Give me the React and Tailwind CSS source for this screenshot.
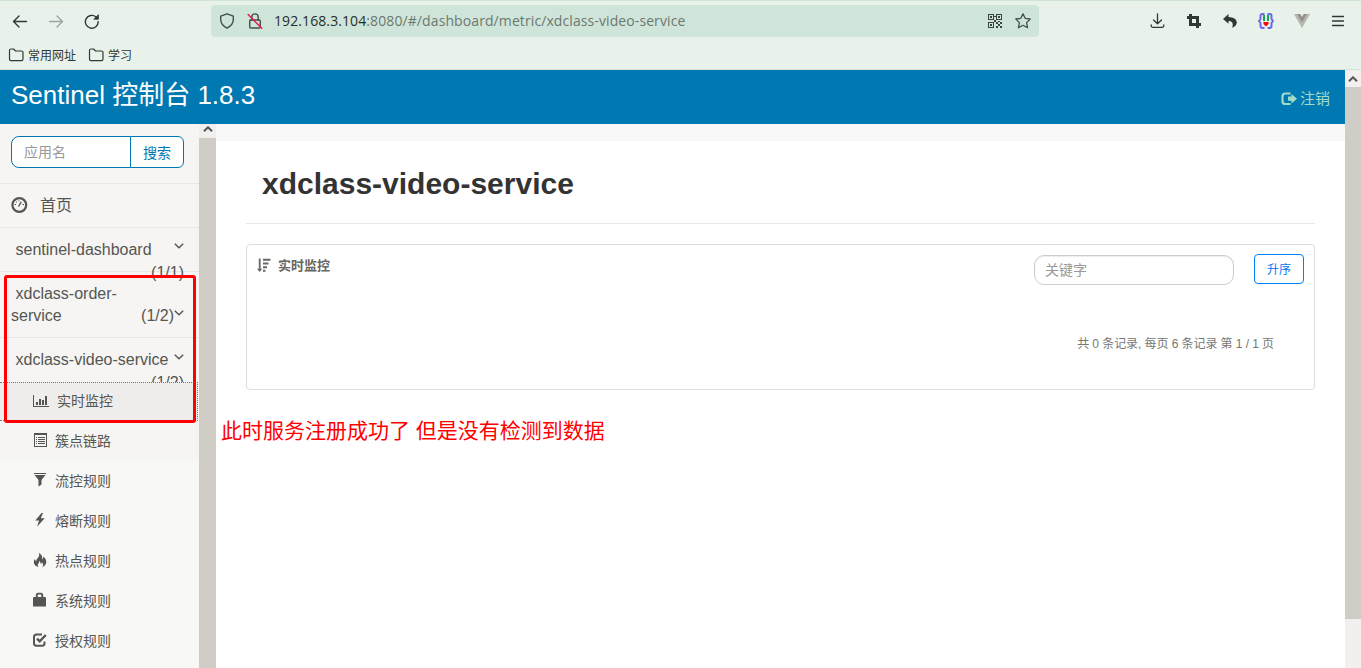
import React from 'react';

const bookmarks = [
  { nome: '常用网址', w: 'w-[80px]' },
  { nome: '学习', w: 'w-[50px]' },
];

const stroke = { fill: 'none', stroke: 'currentColor', strokeWidth: 1.4, strokeLinecap: 'round', strokeLinejoin: 'round' };

function Arrow({ className }) {
  return (
    <svg className={className} width="16" height="16" viewBox="0 0 16 16" {...stroke}>
      <path d="M14.5 8.5H1.5M7 3L1.5 8.5L7 14" />
    </svg>
  );
}

function Chevron({ className }) {
  return (
    <svg className={className} width="10" height="6" viewBox="0 0 10 6" fill="none" stroke="#555551" strokeWidth="1.4">
      <path d="M0.8 0.8L5 4.8L9.2 0.8" />
    </svg>
  );
}

function QrIcon() {
  return (
    <svg width="14" height="14" viewBox="0 0 14 14" fill="#3b4540" shapeRendering="crispEdges">
      <path fillRule="evenodd" d="M0 0h6v6H0zM1 1v4h4V1zM8 0h6v6H8zM9 1v4h4V1zM0 8h6v6H0zM1 9v4h4V9z" />
      <path d="M2 2h2v2H2zM10 2h2v2h-2zM2 10h2v2H2zM6 2h2v1H6zM6 6h2v2H6zM8 8h2v2H8zM10 10h2v2h-2zM12 8h2v2h-2zM8 12h2v2H8zM12 12h2v2h-2zM10 7h2v1h-2z" />
    </svg>
  );
}

function FehelperIcon() {
  return (
    <svg width="16" height="16" viewBox="0 0 16 16">
      <path d="M6.5 1H4.5Q2.5 1 2.5 3V6L1 8L2.5 10V13Q2.5 15 4.5 15H6.5M9.5 1H11.5Q13.5 1 13.5 3V6L15 8L13.5 10V13Q13.5 15 11.5 15H9.5" fill="none" stroke="#6c67ee" strokeWidth="2" />
      <path d="M5 2h2v6H5zM9 2h2v6H9z" fill="#0fa958" />
      <path d="M5.5 9h5v2L8 13.5L5.5 11z" fill="#f00" />
    </svg>
  );
}

function BrowserBar() {
  return (
    <div className="h-[70px] bg-[#e8f2ea] border-t border-b border-[#cfe3d6] font-['Open_Sans','Noto_Sans_CJK_SC',sans-serif] text-[#2f3833]">
      <div className="flex items-center h-10 pl-3">
        <Arrow />
        <svg className="ml-5 text-[#9ba69f]" width="16" height="16" viewBox="0 0 16 16" {...stroke}>
          <path d="M1.5 8.5H14.5M9 3L14.5 8.5L9 14" />
        </svg>
        <svg className="ml-5" width="16" height="16" viewBox="0 0 16 16" {...stroke}>
          <path d="M14.2 8.7A6.4 6.4 0 1 1 12 4L13.5 5.4" />
          <path d="M14.4 2V6.2H10.2z" fill="currentColor" strokeWidth="0.8" />
        </svg>
        <div className="flex items-center ml-[111px] w-[828px] h-8 rounded bg-[#d0e5d9] pl-2 pr-2 text-[#444f49]">
          <svg width="16" height="16" viewBox="0 0 16 16" {...stroke}>
            <path d="M8 .9L14.3 3.2V6.6Q14.3 12 8 15.1Q1.7 12 1.7 6.6V3.2Z" />
          </svg>
          <svg className="ml-3" width="16" height="16" viewBox="0 0 16 16" {...stroke}>
            <path d="M2.7 7.7Q2.7 7 3.7 7H12.3Q13.3 7 13.3 8V14Q13.3 15 12.3 15H3.7Q2.7 15 2.7 14Z" />
            <path d="M4.8 7V4Q4.8 .9 8 .9T11.2 4V7" />
            <path d="M1.2 1.6L14.8 15.3" stroke="#e6184d" />
          </svg>
          <div className="ml-[11px] text-[14px] leading-5 tracking-[0.095px] whitespace-nowrap text-[#6c7871]">
            <span className="text-[#26302b]">192.168.3.104</span>:8080/#/dashboard/metric/xdclass-video-service
          </div>
          <div className="flex items-center gap-[13px] ml-auto">
            <QrIcon />
            <svg width="16" height="16" viewBox="0 0 16 16" {...stroke} strokeWidth="1.3">
              <path d="M8 .9L10.2 5.3L15.2 6L11.6 9.6L12.5 14.7L8 12.3L3.5 14.7L4.4 9.6L.8 6L5.8 5.3Z" />
            </svg>
          </div>
        </div>
        <div className="flex items-center gap-5 ml-auto mr-[15px]">
          <svg width="16" height="16" viewBox="0 0 16 16" {...stroke} strokeWidth="1.3">
            <path d="M7.5 .8V10.5M3.5 7L7.5 10.8L11.5 7M1.2 11.8V12.8Q1.2 14.3 2.7 14.3H12.3Q13.8 14.3 13.8 12.8V11.8" />
          </svg>
          <svg width="16" height="16" viewBox="0 0 16 16" fill="none" stroke="currentColor" strokeWidth="3">
            <path d="M4.5 1V11.5H15M1 4.5H11.5V15" />
          </svg>
          <svg width="16" height="16" viewBox="0 0 16 16" fill="currentColor">
            <path d="M6.5 1L1 5.9L6.5 10.8V8Q12.3 7.7 10.2 14.8Q14.8 12.8 14.8 9.2Q14.3 4.2 6.5 4Z" />
          </svg>
          <FehelperIcon />
          <svg width="16" height="16" viewBox="0 0 16 16">
            <path d="M0 1H5L8 6.2L11 1H16L8 15Z" fill="#b9b5b0" />
            <path d="M3.2 1H6.3L8 4L9.7 1H12.8L8 9.3Z" fill="#918f8c" />
          </svg>
          <svg width="16" height="16" viewBox="0 0 16 16" {...stroke} strokeWidth="1.3">
            <path d="M2.5 3.5h11M2.5 8h11M2.5 12.5h11" />
          </svg>
        </div>
      </div>
      <div className="flex h-7 pl-2 pt-[2px] text-[12px]">
        {bookmarks.map((b) => (
          <div key={b.nome} className={`flex items-center gap-1 h-6 whitespace-nowrap ${b.w}`}>
            <svg width="16" height="14" viewBox="0 0 16 14" {...stroke} strokeWidth="1.2">
              <path d="M1.5 2.5Q1.5 1 3 1H5.5L7.5 3H13.5Q15 3 15 4.5V11Q15 12.7 13.5 12.7H3Q1.5 12.7 1.5 11Z" />
            </svg>
            <span className="pt-[2px]">{b.nome}</span>
          </div>
        ))}
      </div>
    </div>
  );
}

function ScrollArrow() {
  return (
    <svg width="10" height="6" viewBox="0 0 10 6" fill="none" stroke="#555" strokeWidth="2">
      <path d="M1 5.2L5 1.3L9 5.2" />
    </svg>
  );
}

const iconBox = 'w-4 h-4 shrink-0 -mt-[2px]';

const menu = [
  {
    label: '簇点链路',
    icon: (
      <svg className={iconBox} viewBox="0 0 16 16" fill="#555551" shapeRendering="crispEdges">
        <path fillRule="evenodd" d="M2 1h13v14H2zM3 3v11h11V3z" />
        <path d="M4 5h1v1H4zM6 5h7v1H6zM4 7h1v1H4zM6 7h7v1H6zM4 9h1v1H4zM6 9h7v1H6zM4 11h1v1H4zM6 11h7v1H6z" />
      </svg>
    ),
  },
  {
    label: '流控规则',
    icon: (
      <svg className={iconBox} viewBox="0 0 16 16" fill="#555551">
        <path d="M2 1h12v1H2zM2.5 3h11L9.5 8V12.5L6.5 14.5V8Z" />
      </svg>
    ),
  },
  {
    label: '熔断规则',
    icon: (
      <svg className={iconBox} viewBox="0 0 16 16" fill="#555551">
        <path d="M9.5 1L3.3 8.5H7L5 14.8L12.7 6.2H8.8L11 1Z" />
      </svg>
    ),
  },
  {
    label: '热点规则',
    icon: (
      <svg className={iconBox} viewBox="0 0 16 16" fill="#555551">
        <path d="M7 .8Q11 3.5 10 7.5Q11.7 6.5 11.2 4.5Q14.5 7 14.2 10.5Q13.8 13.5 10.3 15Q12 12.5 10 10Q9.8 11.5 8.8 12Q8.5 9.5 7 8.8Q7.5 11 6 12Q5.3 13.5 6.3 15Q2 13.7 1.8 10.3Q1.7 8.5 3 7Q3.1 8.5 4.2 9.3Q4.2 7.2 6.3 5.6Q8 3.8 7 .8Z" />
      </svg>
    ),
  },
  {
    label: '系统规则',
    icon: (
      <svg className={iconBox} viewBox="0 0 16 16" fill="#555551">
        <path fillRule="evenodd" d="M3.8 5V3Q3.8 .8 6 .8H9Q11.2 .8 11.2 3V5H13Q14 5 14 6V14.5H1V6Q1 5 2 5ZM5.7 5H9.3V3Q9.3 2.6 9 2.6H6Q5.7 2.6 5.7 3Z" />
      </svg>
    ),
  },
  {
    label: '授权规则',
    icon: (
      <svg className={iconBox} viewBox="0 0 16 16" fill="none" stroke="#555551" strokeWidth="2">
        <path d="M10 2.5H4.5Q2 2.5 2 5V11.3Q2 13.8 4.5 13.8H10Q12.5 13.8 12.5 11.3V9.5" />
        <path d="M5 6.7L7.7 9.4L13.8 3" strokeWidth="2.4" />
      </svg>
    ),
  },
];

function Sidebar() {
  return (
    <aside className="relative flex w-[216px] shrink-0 bg-[#f8f8f6] text-[#555551]">
      <div className="w-[199px]">
        <div className="bg-[#f6f5f3]">
          <div className="h-[60px] pt-3 pl-[11px] border-b border-[#e7e7e5]">
            <div className="flex w-[173px] h-8 rounded-lg rounded-r-md border border-[#0079b2] bg-white text-[14px] overflow-hidden">
              <div className="w-[119px] pl-3 leading-[30px] text-[#999] border-r border-[#0079b2]">应用名</div>
              <div className="flex-1 text-center leading-[32px] text-[#0079b2]">搜索</div>
            </div>
          </div>
          <div className="flex items-center h-11 pl-[11px] border-b border-[#e7e7e5] text-[16px]">
            <svg className="-mt-[2px]" width="17" height="16" viewBox="0 0 17 16" fill="none" stroke="#555551">
              <circle cx="8.3" cy="8" r="6.9" strokeWidth="2.2" />
              <path d="M7.5 9.5L10.3 4.8" strokeWidth="1.4" />
              <path d="M3.5 7.5h1.5M5 4.6l1 .8M8 3.3v1M11.5 7.5h1.5" strokeWidth="1" />
            </svg>
            <span className="ml-3">首页</span>
          </div>
          <div className="h-11 pl-[15.5px] pr-[15px] pt-[10px] border-b border-[#e7e7e5] text-[16px] leading-[23px]">
            <div className="flex justify-between">
              <span>sentinel-dashboard</span>
              <Chevron className="mt-[5px]" />
            </div>
            <div className="text-right">(1/1)</div>
          </div>
          <div className="h-[66px] pl-[11px] pr-[15px] pt-[11px] border-b border-[#e7e7e5] text-[16px] leading-[22px]">
            <div className="pl-[4.5px]">xdclass-order-</div>
            <div className="flex">
              <span>service</span>
              <span className="ml-auto">(1/2)</span>
              <Chevron className="mt-[5px]" />
            </div>
          </div>
          <div className="h-11 pl-[15.5px] pr-[15px] pt-[10px] text-[16px] leading-[23px] overflow-hidden">
            <div className="flex justify-between">
              <span>xdclass-video-service</span>
              <Chevron className="mt-[6px]" />
            </div>
            <div className="text-right">(1/2)</div>
          </div>
          <div className="flex items-center w-[198px] h-[39px] pl-8 bg-[#eeedeb] border border-l-0 border-dotted border-[#777] text-[14px]">
            <svg className="-mt-px" width="17" height="16" viewBox="0 0 17 16" fill="#555551" shapeRendering="crispEdges">
              <path d="M1 2h1v12H1zM1 13h16v1H1zM4 9h2v3H4zM7 6h2v6H7zM10 7h2v5h-2zM13 3h2v9h-2z" />
            </svg>
            <span className="ml-2">实时监控</span>
          </div>
          <div className="h-10">
            <MenuItem item={menu[0]} />
          </div>
        </div>
        {menu.slice(1).map((item) => (
          <MenuItem key={item.label} item={item} />
        ))}
      </div>
      <div className="w-[17px] bg-[#d0cdc6]">
        <div className="flex items-center justify-center h-[14px] pb-[5px] bg-[#f1f0ee]">
          <ScrollArrow />
        </div>
      </div>
      {/* red highlight over the services */}
      <div className="absolute left-1 top-[151px] w-[192px] h-[148px] border-3 border-[#f00] rounded-[3px]" />
    </aside>
  );
}

function MenuItem({ item }) {
  return (
    <div className="flex items-center h-10 pl-8 text-[14px]">
      {item.icon}
      <span className="ml-[7px]">{item.label}</span>
    </div>
  );
}

function Content() {
  return (
    <main className="flex-1">
      <div className="h-[17px] bg-[#f8f8f8]" />
      <div className="px-[30px]">
        <h1 className="h-[83px] pl-4 pt-[24px] border-b border-[#e7e7e5] text-[30px] leading-[38px] font-bold text-[#333]">xdclass-video-service</h1>
        <div className="h-[146px] mt-[20px] border border-[#ddddd8] rounded-[4px]">
          <div className="flex h-[60px] pl-[10px] pr-[10px]">
            <svg className="mt-[13px]" width="15" height="15" viewBox="0 0 15 15" fill="#666662">
              <path d="M1.8 .5h1.8v10.3H5.3L2.7 14L0 10.8H1.8zM6 .8h7.5v2H6zM6 4.5h5.5v2H6zM6 8.2h4v2H6zM6 11.8h2.5v2H6z" />
            </svg>
            <span className="ml-[6px] pt-[11px] text-[13px] leading-5 font-bold text-[#666662]">实时监控</span>
            <div className="ml-auto mt-[10px] w-[200px] h-[30px] pl-[10px] border border-[#ccccc8] rounded-[10px] shadow-[inset_0_1px_1px_rgba(0,0,0,0.075)] text-[14px] leading-[28px] text-[#999]">关键字</div>
            <div className="ml-5 mt-[9px] w-[50px] h-[30px] border border-[#0081f9] rounded-[4px] text-center text-[12px] leading-[30px] text-[#0079f2]">升序</div>
          </div>
          <div className="pr-[40px] pt-[29px] text-right text-[12px] leading-5 tracking-[-0.07px] text-[#777772]">共 0 条记录, 每页 6 条记录 第 1 / 1 页</div>
        </div>
      </div>
      <p className="pl-[5px] mt-[25px] text-[21px] leading-8 text-[#f00]">此时服务注册成功了 但是没有检测到数据</p>
    </main>
  );
}

export default function App() {
  return (
    <div className="w-[1361px] h-[668px] overflow-hidden bg-white font-['Liberation_Sans','Noto_Sans_CJK_SC',sans-serif]">
      <BrowserBar />
      <div className="flex h-[598px]">
        <div className="flex flex-col flex-1">
          <header className="flex items-start justify-between h-[54px] shrink-0 pl-[11px] pr-[15px] bg-[#0079b2]">
            <span className="pt-[6px] text-[26px] leading-[38px] text-white">Sentinel 控制台 1.8.3</span>
            <div className="flex items-center gap-[3px] pt-[18px] text-[15px] leading-[22px] text-[#a2dcc8]">
              <svg width="16" height="14" viewBox="0 0 16 14" fill="none" stroke="currentColor" strokeWidth="2.2">
                <path d="M9.5 1.5H4.5Q1.5 1.5 1.5 4.3V9.2Q1.5 12 4.5 12H9.5" />
                <path d="M7 4.6H10.5V2L16 6.7L10.5 11.4V8.8H7Z" fill="currentColor" stroke="none" />
              </svg>
              <span>注销</span>
            </div>
          </header>
          <div className="flex flex-1 min-h-0">
            <Sidebar />
            <Content />
          </div>
        </div>
        <div className="w-4 bg-[#f1f0ee]">
          <div className="flex items-center justify-center h-[17px]">
            <ScrollArrow />
          </div>
          <div className="h-[532px] bg-[#d0cdc6]" />
        </div>
      </div>
    </div>
  );
}
